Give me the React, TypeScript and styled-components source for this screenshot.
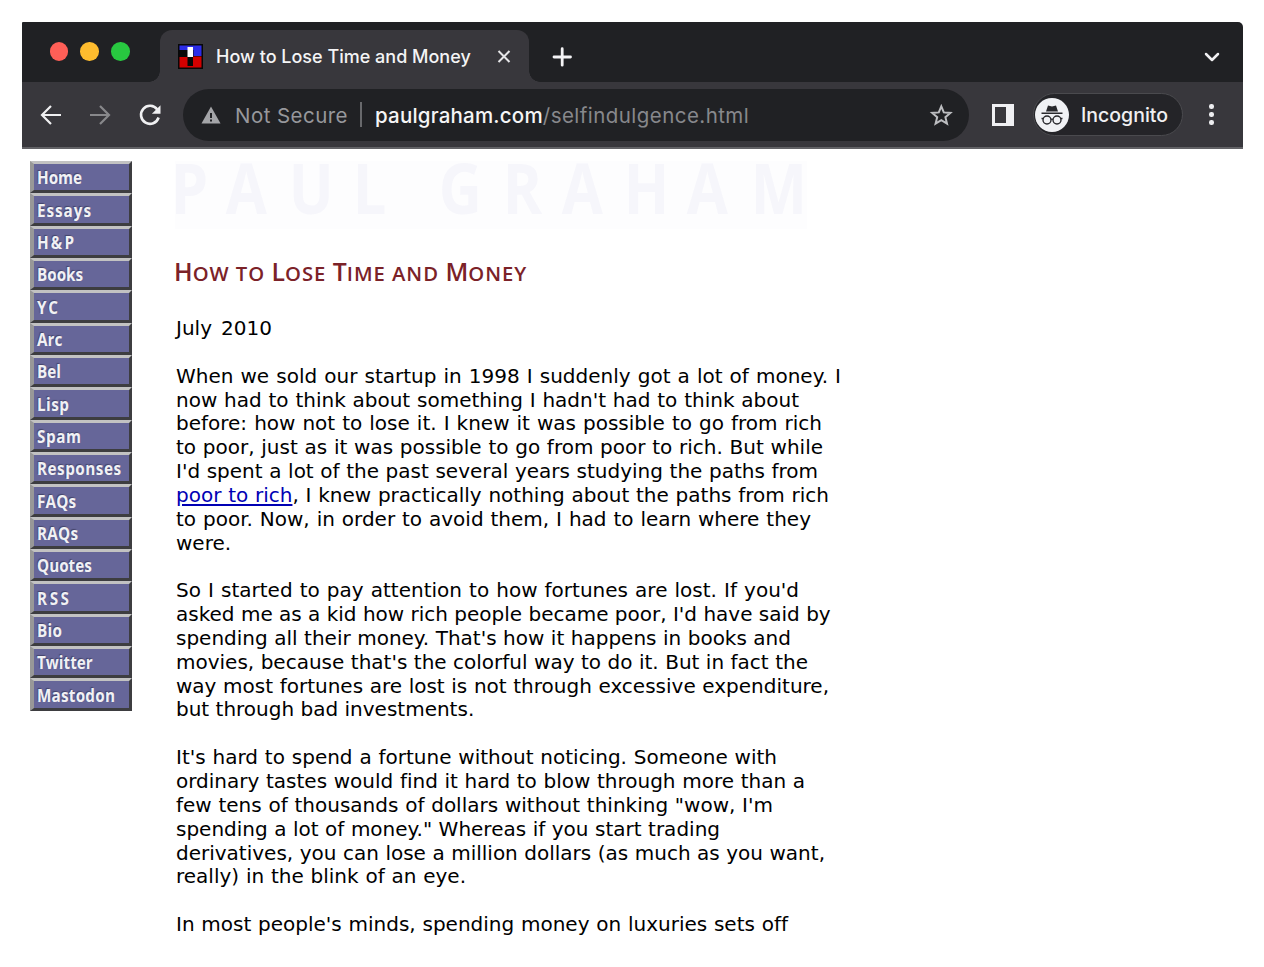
import React from 'react';
import styled, { createGlobalStyle } from 'styled-components';

const Global = createGlobalStyle`
  * { box-sizing: border-box; }
  body { margin: 0; background: #fff; overflow: hidden; }
`;

const Desktop = styled.div`
  width: 1264px;
  height: 967px;
  padding: 22px 21px 28px 22px;
`;

const Window = styled.div`
  height: 917px;
  display: flex;
  flex-direction: column;
  overflow: hidden;
  border-radius: 1px 5px 5px 1px;
  font-family: Inter, 'Liberation Sans', sans-serif;
`;

const TabStrip = styled.div`
  height: 60px;
  flex: none;
  display: flex;
  background: #202124;
`;

const Lights = styled.div`
  width: 138px;
  padding: 20px 0 0 27.5px;
  display: flex;
  gap: 12px;
`;

const Light = styled.span<{ $color: string }>`
  width: 18.7px;
  height: 18.7px;
  border-radius: 50%;
  background: ${(p) => p.$color};
`;

const Tab = styled.div`
  position: relative;
  width: 369px;
  height: 52px;
  margin-top: 8px;
  padding: 0 17px 0 18px;
  display: flex;
  align-items: center;
  border-radius: 12px 12px 0 0;
  background: #38373c;
  &::before,
  &::after {
    content: '';
    position: absolute;
    bottom: 0;
    width: 11px;
    height: 11px;
  }
  &::before {
    left: -11px;
    background: radial-gradient(circle at 0 0, transparent 10.5px, #38373c 11px);
  }
  &::after {
    right: -11px;
    background: radial-gradient(circle at 100% 0, transparent 10.5px, #38373c 11px);
  }
`;

const TabTitle = styled.span`
  flex: 1;
  margin: 1px 0 0 13px;
  color: #f4f4f5;
  font-size: 18px;
  font-weight: 450;
  line-height: 24px;
  white-space: nowrap;
`;

const NewTab = styled.div`
  width: 66px;
  display: flex;
  align-items: center;
  justify-content: center;
  padding-top: 9px;
`;

const TabSearch = styled.div`
  margin-left: auto;
  padding: 29px 22px 0 0;
  line-height: 0;
`;

const Toolbar = styled.div`
  height: 67px;
  flex: none;
  display: flex;
  align-items: center;
  padding-left: 16px;
  background: #38373c;
  border-bottom: 2px solid #626266;
`;

const NavButtons = styled.div`
  width: 145px;
  display: flex;
  gap: 23.5px;
`;

const AddressBar = styled.div`
  width: 786px;
  height: 52px;
  display: flex;
  align-items: center;
  padding: 0 16px 0 18px;
  border-radius: 26px;
  background: #202124;
  font-size: 20.5px;
  white-space: nowrap;
`;

const Security = styled.span`
  width: 125px;
  margin: 1px 0 0 14px;
  color: #97989c;
  letter-spacing: 0.45px;
`;

const Divider = styled.span`
  width: 1.5px;
  height: 25px;
  background: #68696c;
`;

const Url = styled.span`
  flex: 1;
  margin: 1px 0 0 13.5px;
  color: #87888c;
  letter-spacing: 0.45px;
`;

const Host = styled.span`
  color: #f5f5f6;
  font-weight: 450;
  letter-spacing: 0.2px;
`;

const PanelIcon = styled.span`
  width: 22px;
  height: 22px;
  margin-left: 23px;
  border: 3px solid #f0f0f3;
  border-right-width: 8px;
`;

const Incognito = styled.div`
  width: 150px;
  height: 43px;
  margin-left: 19px;
  display: flex;
  align-items: center;
  gap: 12px;
  padding-left: 1px;
  border: 1.5px solid #4a4a4e;
  border-radius: 22px;
  background: #242428;
  color: #f0f0f2;
  font-size: 19.5px;
  font-weight: 450;
`;

const Menu = styled.div`
  margin-left: 26px;
  display: flex;
  flex-direction: column;
  gap: 3.5px;
`;

const Dot = styled.i`
  width: 4.5px;
  height: 4.5px;
  border-radius: 50%;
  background: #ededf0;
`;

const Page = styled.div`
  flex: 1;
  min-height: 0;
  display: flex;
  padding: 12px 0 0 8px;
  background: #fff;
`;

const Sidebar = styled.nav`
  width: 145px;
  flex: none;
`;

const NavItem = styled.a`
  width: 102px;
  height: 32.33px;
  display: flex;
  align-items: center;
  padding: 0.5px 0 0 4px;
  border-style: solid;
  border-width: 3px 3px 3px 4px;
  border-color: #c2c2c2 #3d3d40 #3d3d40 #989898;
  background: #666699;
  color: #f1f1f4;
  font: 700 17.500px/20px 'Open Sans', 'Noto Sans', sans-serif;
  text-shadow: -1px -1px 1px #44446a;
  white-space: nowrap;
`;

const NavLabel = styled.span<{ $width: number }>`
  flex: none;
  width: ${(p) => p.$width / 0.87}px;
  margin-left: -1px;
  display: flex;
  justify-content: space-between;
  transform: scaleX(0.87);
  transform-origin: 0 50%;
`;

const Article = styled.main`
  display: flex;
  flex-direction: column;
  align-items: flex-start;
  color: #000;
`;

const Banner = styled.div`
  height: 68px;
  width: 742px;
  flex: none;
  background: #fdfdfe;
  display: flex;
  color: #f6f6fb;
  font: 700 70px/54px 'Open Sans', sans-serif;
  transform: scaleX(0.852);
  transform-origin: 0 0;
`;

const Letter = styled.span<{ $advance: number }>`
  flex: none;
  width: ${(p) => p.$advance / 0.852}px;
  margin-top: -1px;
  &:first-child {
    margin-left: -5px;
  }
`;

const Title = styled.h1`
  margin: 27px 0 0;
  color: #7b2228;
  font: 600 24.500px/32px 'Open Sans', sans-serif;
  white-space: nowrap;
  flex: none;
  transform: translateX(-1px) scaleX(1.012);
  transform-origin: 0 50%;
`;

const Small = styled.span`
  font-size: 20px;
  letter-spacing: 0.95px;
`;

const Paragraph = styled.p`
  margin: 0 0 23.84px 1px;
  flex: none;
  font: 20px/23.84px 'DejaVu Sans', Verdana, sans-serif;
  font-variant-ligatures: none;
  &:first-of-type {
    margin-top: 27px;
  }
`;

const Line = styled.span<{ $width: number }>`
  display: block;
  width: ${(p) => p.$width}px;
  text-align: justify;
  text-align-last: justify;
  white-space: nowrap;
  a {
    color: #0000b4;
    text-decoration: underline;
    text-decoration-thickness: 1.5px;
    text-underline-offset: 2px;
  }
`;

const banner: [string, number][] = [
  ['P', 55], ['A', 63], ['U', 64], ['L', 58], [' ', 28], ['G', 64],
  ['R', 59], ['A', 62], ['H', 63], ['A', 64], ['M', 54],
];

const links: [string, number][] = [
  ['Home', 44], ['Essays', 54], ['H&P', 37], ['Books', 46], ['YC', 21], ['Arc', 25],
  ['Bel', 24], ['Lisp', 32], ['Spam', 44], ['Responses', 84], ['FAQs', 39], ['RAQs', 41],
  ['Quotes', 54], ['RSS', 32], ['Bio', 25], ['Twitter', 55], ['Mastodon', 78],
];

const paragraphs: [React.ReactNode, number][][] = [
  [['July 2010', 96]],
  [
    ['When we sold our startup in 1998 I suddenly got a lot of money. I', 665],
    ["now had to think about something I hadn't had to think about", 623],
    ['before: how not to lose it. I knew it was possible to go from rich', 646],
    ['to poor, just as it was possible to go from poor to rich. But while', 647],
    ["I'd spent a lot of the past several years studying the paths from", 642],
    [<><a href="#">poor to rich</a>, I knew practically nothing about the paths from rich</>, 653],
    ['to poor. Now, in order to avoid them, I had to learn where they', 635],
    ['were.', 54],
  ],
  [
    ["So I started to pay attention to how fortunes are lost. If you'd", 623],
    ["asked me as a kid how rich people became poor, I'd have said by", 654],
    ["spending all their money. That's how it happens in books and", 615],
    ["movies, because that's the colorful way to do it. But in fact the", 632],
    ['way most fortunes are lost is not through excessive expenditure,', 653],
    ['but through bad investments.', 297],
  ],
  [
    ["It's hard to spend a fortune without noticing. Someone with", 601],
    ['ordinary tastes would find it hard to blow through more than a', 629],
    ['few tens of thousands of dollars without thinking "wow, I\'m', 597],
    ['spending a lot of money." Whereas if you start trading', 544],
    ['derivatives, you can lose a million dollars (as much as you want,', 649],
    ['really) in the blink of an eye.', 290],
  ],
  [["In most people's minds, spending money on luxuries sets off", 612]],
];

const Favicon = () => (
  <svg width="25" height="25" viewBox="0 0 25 25">
    <path fill="#080808" d="M0 0h25v25H0z" />
    <path fill="#2c2ce8" d="M1.500 1.500h22v10.500h-8V6H1.500z" />
    <path fill="#d40000" d="M1.500 13h8v10.500h-8zM15 12.500h8.500v11H15zM9 22h6v1.500H9z" />
    <path fill="#fff" d="M9.500 3h5.500v10H9.500z" />
  </svg>
);

const Arrow = ({ color = '#f0f0f2', flip = false }: { color?: string; flip?: boolean }) => (
  <svg width="26" height="26" viewBox="0 0 26 26" fill="none" stroke={color} strokeWidth="2.2">
    <path d={flip ? 'M2 13h19M12 4l9 9-9 9' : 'M23 13H4M13 4l-9 9 9 9'} />
  </svg>
);

export default function App() {
  return (
    <>
      <Global />
      <Desktop>
        <Window>
          <TabStrip>
            <Lights>
              <Light $color="#ff5f57" />
              <Light $color="#febc2e" />
              <Light $color="#28c840" />
            </Lights>
            <Tab>
              <Favicon />
              <TabTitle>How to Lose Time and Money</TabTitle>
              <svg width="16" height="16" viewBox="0 0 16 16" stroke="#e6e6e8" strokeWidth="2">
                <path d="M2.500 3l11 11M13.500 3l-11 11" />
              </svg>
            </Tab>
            <NewTab>
              <svg width="20" height="20" viewBox="0 0 20 20" stroke="#f4f4f6" strokeWidth="2.800" strokeLinecap="round">
                <path d="M2 10h16.500M10.200 1.700v16.500" />
              </svg>
            </NewTab>
            <TabSearch>
              <svg width="18" height="12" viewBox="0 0 18 12" fill="none" stroke="#f0f0f2" strokeWidth="2.500" strokeLinecap="round" strokeLinejoin="round">
                <path d="M3 3l6 6 6-6" />
              </svg>
            </TabSearch>
          </TabStrip>
          <Toolbar>
            <NavButtons>
              <Arrow />
              <Arrow color="#88888b" flip />
              <svg width="26" height="26" viewBox="0 0 26 26">
                <path fill="none" stroke="#f0f0f2" strokeWidth="2.600" d="M20.300 7.500A9 9 0 1 0 21.600 15.500" />
                <path fill="#f0f0f2" d="M23.500 3.200v8.600h-8.600z" />
              </svg>
            </NavButtons>
            <AddressBar>
              <svg width="20" height="18" viewBox="0 0 20 18">
                <path fill="#a4a5a8" d="M10 .5L19.500 17.500H.5z" />
                <path fill="#202124" d="M9 7h2v5H9zM9 13.500h2v2H9z" />
              </svg>
              <Security>Not Secure</Security>
              <Divider />
              <Url><Host>paulgraham.com</Host>/selfindulgence.html</Url>
              <svg width="24" height="24" viewBox="0 0 24 24" fill="none" stroke="#bcbdc0" strokeWidth="2">
                <path d="M12.300 3.300l2.500 6.100 6.600.5-5 4.300 1.600 6.400-5.700-3.500-5.700 3.500 1.600-6.400-5-4.300 6.600-.5z" />
              </svg>
            </AddressBar>
            <PanelIcon />
            <Incognito>
              <svg width="34" height="34" viewBox="0 0 34 34">
                <circle cx="17" cy="17" r="17" fill="#f0f1f4" />
                <path fill="#28282c" d="M13 7.500l4 1 4-1 2 6H11zM6.500 14.500h21v1.500h-21z" />
                <g fill="none" stroke="#28282c" strokeWidth="1.400">
                  <circle cx="12" cy="22" r="4" />
                  <circle cx="22" cy="22" r="4" />
                  <path d="M16 21.500q1-.8 2 0M6.500 20.500h2M25.500 20.500h2" />
                </g>
              </svg>
              Incognito
            </Incognito>
            <Menu><Dot /><Dot /><Dot /></Menu>
          </Toolbar>
          <Page>
            <Sidebar>
              {links.map(([label, width]) => (
                <NavItem key={label}>
                  <NavLabel $width={width}>
                    {label.split('').map((c, i) => <span key={i}>{c}</span>)}
                  </NavLabel>
                </NavItem>
              ))}
            </Sidebar>
            <Article>
              <Banner>
                {banner.map(([c, advance], i) => <Letter key={i} $advance={advance}>{c}</Letter>)}
              </Banner>
              <Title>
                H<Small>OW TO</Small> L<Small>OSE</Small> T<Small>IME AND</Small> M<Small>ONEY</Small>
              </Title>
              {paragraphs.map((lines, i) => (
                <Paragraph key={i}>
                  {lines.map(([text, width], j) => <Line key={j} $width={width}>{text}</Line>)}
                </Paragraph>
              ))}
            </Article>
          </Page>
        </Window>
      </Desktop>
    </>
  );
}
